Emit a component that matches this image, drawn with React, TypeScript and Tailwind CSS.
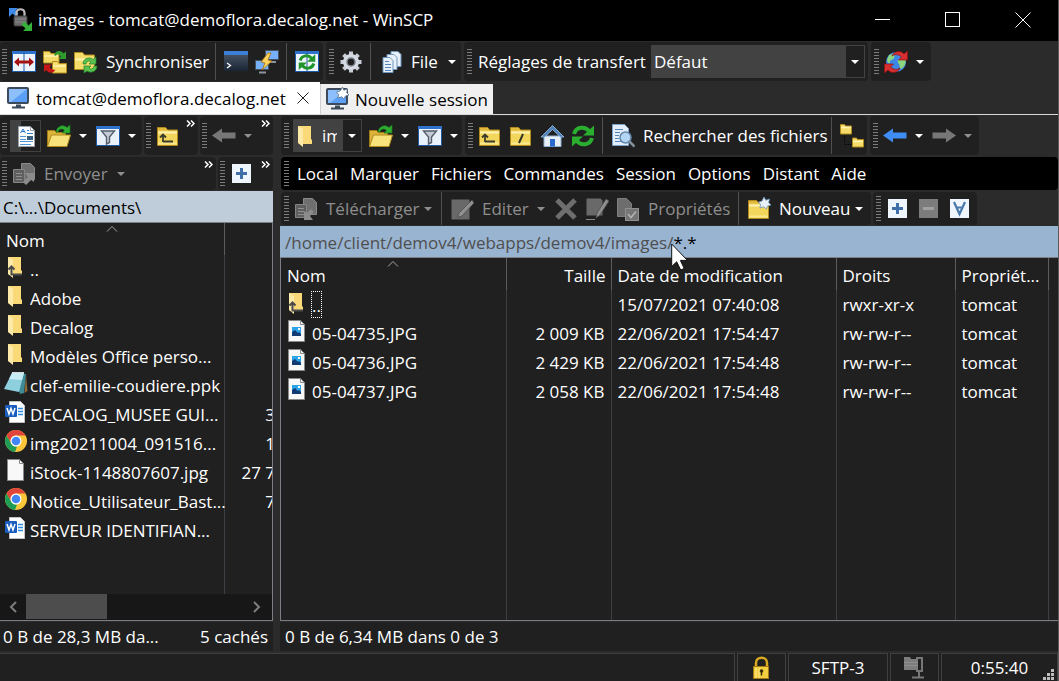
import type { ReactNode } from "react";
import clsx from "clsx";

/* ---------- icons ---------- */

function Svg({ children, size = 24 }: { children: ReactNode; size?: number }) {
  return (
    <svg width={size} height={size} viewBox="0 0 24 24" fill="none" className="shrink-0" aria-hidden="true">
      {children}
    </svg>
  );
}

const Folder = ({ children }: { children?: ReactNode }) => (
  <Svg>
    <path d="M1.500 21.500v-18h8l2 2.500h10v15.500z" fill="#f3d75c" stroke="#b08a1c" />
    <path d="M2 4h7l2 2.500H2z" fill="#e0b83c" />
    <path d="M2 8.500h19" stroke="#fdf2b4" strokeWidth="2" />
    <path d="M2 19.500h19" stroke="#f9e98c" strokeWidth="2" />
    {children}
  </Svg>
);

const FolderUp = () => (
  <Folder>
    <path d="M7 17.500h10M7 18v-7M4 13.500l3-3 3 3" stroke="#3d3d2c" strokeWidth="1.800" />
  </Folder>
);

const FolderRoot = () => (
  <Folder>
    <path d="M10 19l4-9" stroke="#33332a" strokeWidth="2" />
  </Folder>
);

const FolderNew = () => (
  <Folder>
    <path d="M17 0l1.800 3.200L22.500 2l-.8 3.600L24 8l-3.600 1-1 3-2.800-2.200L13 11l.6-3.600L11.500 5l3.500-1z" fill="#e9f2fb" stroke="#6f93b8" strokeWidth=".8" />
  </Folder>
);

const FolderOpen = () => (
  <Svg>
    <path d="M.5 22V6.500h7l2 2h9V22z" fill="#dcb33a" stroke="#a27b17" />
    <path d="M.5 22.500l4-11.500h19l-3.500 11.500z" fill="#f8e27c" stroke="#b08a1c" />
    <path d="M9 8c1-6 7-8 11-4.500L23 1v8h-8l2.500-2.500C15 4 11.500 5 11 8z" fill="#2fae33" stroke="#177a1c" strokeWidth=".7" />
  </Svg>
);

const PanelsCompare = () => (
  <Svg>
    <rect x=".5" y="1.500" width="23" height="20" fill="#eef4fb" stroke="#1e58a8" />
    <path d="M0 2.500h24" stroke="#2d72cc" strokeWidth="3" />
    <path d="M12 1v20" stroke="#1e58a8" />
    <path d="M2 12l5-4.500v3h10v-3l5 4.500-5 4.500v-3H7v3z" fill="#a31212" />
  </Svg>
);

const SyncFolders = () => (
  <Svg>
    <path d="M.5 13V1.500h6l1.500 2h8V13z" fill="#f5dc6a" stroke="#b08a1c" />
    <path d="M9.500 23V11.500h5l1.500 2h7.500V23z" fill="#f5dc6a" stroke="#b08a1c" />
    <path d="M1 6h14M10 16h13" stroke="#fff3b3" strokeWidth="1.500" />
    <path d="M11 5c2-6 8-4.500 9.500-1.500L23 1.500V9h-7.500L18 6.500C16 4 13.500 4 13 6z" fill="#2f9c2e" />
    <path d="M1 14.500h8L6.500 17c1.500 2.500 4 3 6 2.500-2 4.500-7.500 4-9 .5L1 22z" fill="#c41818" />
  </Svg>
);

const SyncFolder = () => (
  <Svg>
    <path d="M.5 19.500V2.500h8l2 2.500h10v14.500z" fill="#f5dc6a" stroke="#b08a1c" />
    <path d="M1 9.500h19" stroke="#fff3b3" strokeWidth="2" />
    <path d="M9 14c0-6 7-7.500 10-4.500L22 7v7h-7l2-2c-2-2-4.500-.5-5 2z" fill="#5ac150" stroke="#1d8226" strokeWidth=".7" />
    <path d="M23 16c0 6-7 7.500-10 5l-3 2v-7h7l-2 2c2 2 4.500.5 5-2z" fill="#5ac150" stroke="#1d8226" strokeWidth=".7" />
  </Svg>
);

const Terminal = () => (
  <Svg>
    <defs>
      <linearGradient id="term" x1="0" y1="0" x2="0" y2="1">
        <stop offset="0" stopColor="#4c5768" />
        <stop offset="1" stopColor="#1a2536" />
      </linearGradient>
    </defs>
    <rect y="2" width="24" height="19" fill="url(#term)" />
    <path d="M0 3h24" stroke="#3c7fd6" strokeWidth="4" />
    <path d="M3 13l3.500 2.500L3 18" stroke="#fff" strokeWidth="1.300" />
  </Svg>
);

const Putty = () => (
  <Svg>
    <rect x="10.500" y=".5" width="13" height="9" fill="#76b0fb" stroke="#47525f" />
    <path d="M14 12h7" stroke="#8b949e" strokeWidth="2" />
    <rect x=".5" y="10.500" width="13" height="9" fill="#76b0fb" stroke="#47525f" />
    <path d="M4 22.500h7" stroke="#8b949e" strokeWidth="2" />
    <path d="M13 3L6 12l4 1-3 7 10-9-4-1 3-7z" fill="#fbd25c" stroke="#a46a12" strokeWidth=".8" />
  </Svg>
);

const CycleArrows = () => (
  <>
    <path d="M3 10C5 2.500 14 2 18 7" stroke="currentColor" strokeWidth="4" />
    <path d="M23 1.500v10H12z" fill="currentColor" />
    <path d="M21 14c-2 7.500-11 8-15 3" stroke="currentColor" strokeWidth="4" />
    <path d="M1 22.500v-10h11z" fill="currentColor" />
  </>
);

const PanelsSync = () => (
  <Svg>
    <rect x=".5" y="1.500" width="23" height="20" fill="#eef4fb" stroke="#1e58a8" />
    <path d="M0 2.500h24" stroke="#2d72cc" strokeWidth="3" />
    <path d="M12 1v20" stroke="#1e58a8" />
    <g transform="translate(3 3) scale(.75)" color="#1f9428">
      <CycleArrows />
    </g>
  </Svg>
);

const Gear = () => (
  <Svg>
    {[0, 45, 90, 135].map((deg) => (
      <path key={deg} d="M12 1.500v21" stroke="#c9cfd8" strokeWidth="4" transform={`rotate(${deg} 12 12)`} />
    ))}
    <circle cx="12" cy="12" r="8" fill="#d6dae2" />
    <circle cx="12" cy="12" r="4" fill="#202020" stroke="#7b828e" strokeWidth="1.500" />
  </Svg>
);

const Queue = () => (
  <Svg>
    {[
      [11.5, 1],
      [7.5, 4],
      [3.5, 7],
    ].map(([x, y]) => (
      <path key={x} transform={`translate(${x} ${y})`} d="M.5.5h7l3 3v12H.5z" fill="#e8f0f9" stroke="#6f95bd" />
    ))}
    <path d="M6 11.500h4M6 14.500h6M6 17.500h6M6 20.500h6" stroke="#5584b8" />
  </Svg>
);

const Globe = () => (
  <Svg>
    <circle cx="12" cy="12" r="10" fill="#3d87e6" />
    <path d="M5 5c4-2 7 0 5 3s-4 1-4 4-3 0-3-2zM15 9l6-1c2 5-1 9-4 11-2-2-1-4-2-5s-2-4 0-5z" fill="#8ad67e" />
    <path d="M8 6c2-5 9-6 12-2l3.500-3v9h-9l3-3C14 4 11 4 8 6z" fill="#d83030" stroke="#8d1010" strokeWidth=".7" />
    <path d="M16 18c-2 5-9 6-12 2L.5 23v-9h9l-3 3c3.500 3 6.500 3 9.500 1z" fill="#d83030" stroke="#8d1010" strokeWidth=".7" />
  </Svg>
);

const Monitor = ({ star = false }: { star?: boolean }) => (
  <Svg>
    <rect x="2" y="2" width="20" height="15" rx="1" fill="#5ba0f6" stroke="#3c4a5c" strokeWidth="2" />
    <path d="M3 3h18L5 16H3z" fill="#8cbffb" />
    <path d="M10 19.500h5M6 21.500h13" stroke="#3c4a5c" strokeWidth="2" />
    {star && (
      <path d="M17.500 0l1.300 3.200L22.500 2l-.8 3.600L24 8l-3.600 1-1.400 3-2.400-2.200L13 11l.6-3.600L11.500 5l3.700-1z" fill="#fff" stroke="#5d7186" strokeWidth=".8" />
    )}
  </Svg>
);

const AppLogo = () => (
  <Svg>
    <path d="M1 0h9L7.500 2.500l3 3-3 3-3-3L1 9z" fill="#3f8ae8" />
    <path d="M8.500 9V5c0-5 8-5 8 0v4" stroke="#bdbdbd" strokeWidth="2.200" />
    <rect x="6" y="8" width="13" height="10" rx="1" fill="#6b6b6b" stroke="#3e3e3e" />
    <path d="M7 11h11M7 14h11" stroke="#8c8c8c" />
    <path d="M24 23h-9l2.500-2.500-4-4 3-3 4 4L24 14z" fill="#35b03a" />
  </Svg>
);

const Filter = () => (
  <Svg>
    <rect x=".5" y="2.500" width="23" height="19" fill="#e9f1fb" stroke="#1e58a8" />
    <path d="M0 3.500h24" stroke="#2d72cc" strokeWidth="3" />
    <path d="M5.500 7h13l-5 6v5.500l-3 1.500v-7z" fill="#c4cbd4" stroke="#54606e" strokeWidth="1.400" />
  </Svg>
);

const DocList = () => (
  <Svg>
    <path d="M4.500 2.500h12l4 4v16h-16z" fill="#fff" stroke="#9aa3ad" />
    <path d="M16.500 2.500v4h4" stroke="#9aa3ad" />
    <path d="M6.500 9l2.500-4 2.500 4M8 7.500h3M13 6.500h2M13 9.500h6" stroke="#2a7bd6" />
    <path d="M6 12.500h6M6 15.500h6M6 17.500h13M6 20.500h11" stroke="#4f95d8" />
    <rect x="13" y="12" width="6" height="4" fill="#39617f" />
  </Svg>
);

const Home = () => (
  <Svg>
    <path d="M4 12h17v10.500H4z" fill="#e7f0f9" stroke="#8fb0d2" />
    <path d="M1 13L12.500 1.500 24 13h-3.500l-8-7.500L4.500 13z" fill="#4d7fb8" stroke="#9dc1e6" strokeWidth=".8" />
    <path d="M10 15h5v7.500h-5z" fill="#2b6bd0" />
  </Svg>
);

const Refresh = () => (
  <Svg>
    <g color="#2aae2f">
      <CycleArrows />
    </g>
  </Svg>
);

const FindFiles = () => (
  <Svg>
    <path d="M1.500.5h12l4 4v17h-16z" fill="#e4eefa" stroke="#7da3cc" />
    <path d="M4 5.500h8M4 8.500h5M4 11.500h4M4 14.500h4M4 17.500h6" stroke="#5584b8" />
    <circle cx="14.500" cy="13.500" r="5.500" fill="#b5d5f5" stroke="#6385a8" strokeWidth="1.500" />
    <path d="M18.500 17.500l5 5" stroke="#81909f" strokeWidth="2.500" />
  </Svg>
);

const Tree = () => (
  <Svg>
    <path d="M.5 10V.5h4l1 1.500h6v8zM12.500 23v-9h4l1 1.500h6V23z" fill="#f5dc6a" stroke="#b08a1c" />
    <path d="M1 3.500h10M13 17.500h10" stroke="#fff3b3" strokeWidth="1.500" />
    <path d="M4.500 12v8.500h7" stroke="#000" strokeDasharray="1 1" />
  </Svg>
);

const Arrow = ({ color, flip = false }: { color: string; flip?: boolean }) => (
  <Svg>
    <path d="M0 11.500l10-7v4h13.500v6H10v4z" fill={color} transform={flip ? "matrix(-1 0 0 1 24 0)" : undefined} />
  </Svg>
);

const Transfer = ({ up = false }: { up?: boolean }) => (
  <Svg>
    <path d="M9.500 1.500h9l4 4v12h-13z" fill="#6f6f6f" stroke="#8a8a8a" />
    <path d="M1.500 7.500h11v13h-11z" fill="#5f5f5f" stroke="#858585" />
    <path d="M4 11.500h6M4 14.500h6M4 17.500h6" stroke="#8f8f8f" />
    {up ? (
      <path d="M22 11v9l-3-2-5 5-3-3 5-5-3-4z" fill="#8c8c8c" />
    ) : (
      <path d="M10 23v-9l3 2 4-4 3 3-4 4 3 4z" fill="#8c8c8c" />
    )}
  </Svg>
);

const Edit = () => (
  <Svg>
    <path d="M1.500 2.500h18v20h-18z" fill="#696969" />
    <path d="M22 3L9 16l-1.500 4.500L12 19 24 6z" fill="#8f8f8f" stroke="#4d4d4d" strokeWidth=".8" />
  </Svg>
);

const Delete = () => (
  <Svg>
    <path d="M3 3l18 18M21 3L3 21" stroke="#6e6e6e" strokeWidth="5" />
  </Svg>
);

const Rename = () => (
  <Svg>
    <path d="M1.500 1.500h14l2 2v15h-16z" fill="#696969" />
    <path d="M1 22.500h9" stroke="#8a8a8a" />
    <path d="M21 2l-9 14-1 5 4-3L24 4z" fill="#8f8f8f" stroke="#4d4d4d" strokeWidth=".8" />
  </Svg>
);

const Properties = () => (
  <Svg>
    <path d="M1.500 1.500h9l5 5v13h-14z" fill="#6d6d6d" stroke="#7e7e7e" />
    <rect x="9.500" y="11.500" width="13" height="12" fill="#757575" stroke="#8f8f8f" />
    <path d="M12 17l3 3.500 5-6" stroke="#b4b4b4" strokeWidth="1.500" />
  </Svg>
);

const SelectMark = ({ kind }: { kind: "plus" | "minus" | "all" }) => (
  <Svg>
    <rect x="2" y="2" width="19" height="19" fill={kind === "minus" ? "#7c7c7c" : "#eef5fd"} />
    {kind === "plus" && <path d="M11.500 6v11M6 11.500h11" stroke="#3f6ea8" strokeWidth="3" />}
    {kind === "minus" && <path d="M6 11.500h11" stroke="#a0a0a0" strokeWidth="3" />}
    {kind === "all" && <path d="M6 5l5.500 12L17 5M8 10.500h7" stroke="#4a79ad" strokeWidth="2.200" />}
  </Svg>
);

const FileFolder = ({ up = false }: { up?: boolean }) => (
  <Svg>
    <path d="M4 2h13v13l1 1v4H8l-4-1z" fill="#f9d978" />
    <path d="M4 2l5 3v18l-5-4z" fill="#fdeaa9" />
    {up && <path d="M7.500 12v7.500H18M4.500 14.500l3-3 3 3" stroke="#4a4a4a" strokeWidth="2" />}
  </Svg>
);

const FilePage = ({ children }: { children?: ReactNode }) => (
  <Svg>
    <path d="M3.500 1.500h12l4 4v17h-16z" fill="#f8f8f8" stroke="#8a8a8a" />
    <path d="M15.500 1.500v4h4" stroke="#8a8a8a" />
    {children}
  </Svg>
);

const FileImage = () => (
  <FilePage>
    <rect x="7" y="8" width="9" height="9" fill="#2da3e8" />
    <path d="M7 17v-4l3-2 3 3 1-1 2 2v2z" fill="#123a73" />
    <rect x="13" y="9" width="2" height="2" fill="#fff" />
  </FilePage>
);

const FileWord = () => (
  <Svg>
    <path d="M5.500 1.500h11l4 4v17h-15z" fill="#fff" stroke="#c2c2c2" />
    <path d="M14 8.500h5M14 11.500h5M14 14.500h5" stroke="#2f8be0" strokeWidth="1.500" />
    <rect x="1" y="5" width="12" height="12" rx="1" fill="#1a5dbe" />
    <path d="M3 8l2 6 2-5.500L9 14l2-6" stroke="#fff" strokeWidth="1.500" />
  </Svg>
);

const FileKey = () => (
  <Svg>
    <path d="M22 4l1.500 16-3 2z" fill="#8b6a35" />
    <path d="M9 1l13 2-2 19-4 1z" fill="#3f8b96" />
    <path d="M8 2h12l-5 19L0 18z" fill="#8fd0de" />
    <path d="M8 2h12l-2 7L5 8z" fill="#c8ecf3" />
    <path d="M8 1.500h12" stroke="#d9d9d9" />
  </Svg>
);

const FileChrome = () => (
  <Svg>
    <circle cx="12" cy="12" r="11" fill="#fbc63a" />
    <path d="M2.500 6.500a11 11 0 0 1 19 0H12a5.500 5.500 0 0 0-4.800 8.200z" fill="#e0443a" />
    <path d="M2.500 6.500l4.800 8.200A5.500 5.500 0 0 0 13 17.400L11 23A11 11 0 0 1 2.500 6.500z" fill="#1f9d57" />
    <circle cx="12" cy="12" r="5.500" fill="#fff" />
    <circle cx="12" cy="12" r="4.300" fill="#4285f4" />
  </Svg>
);

const Padlock = () => (
  <Svg>
    <path d="M6 11V7c0-7 11-7 11 0v4" stroke="#d9aa1f" strokeWidth="2.500" />
    <rect x="3.500" y="10.500" width="15" height="12" fill="#f2cf3f" stroke="#a27b17" />
    <path d="M6 12v10M9 12v10" stroke="#fbe98d" />
    <circle cx="11.500" cy="15" r="1.800" fill="#3a2c08" />
    <path d="M11.500 15v4.500" stroke="#3a2c08" strokeWidth="1.500" />
  </Svg>
);

const Compress = () => (
  <Svg>
    <path d="M1 1h6l1 2h7v11H1z" fill="#7d7d7d" />
    <path d="M1 6.500h14M1 9.500h14" stroke="#8f8f8f" />
    <path d="M13 2h6v13h-6M16 15v6M9 21.500h12" stroke="#777" strokeWidth="2" />
  </Svg>
);

const ScrollArrow = ({ right = false }: { right?: boolean }) => (
  <svg width="10" height="12" viewBox="0 0 10 12" fill="none" aria-hidden="true">
    <path d={right ? "M2 1l5 5-5 5" : "M8 1L3 6l5 5"} stroke="#7d7d7d" strokeWidth="2" />
  </svg>
);

/* ---------- toolbar parts ---------- */

function Band({ children, className }: { children: ReactNode; className?: string }) {
  return (
    <div role="toolbar" className={clsx("flex items-center overflow-hidden rounded-sm bg-[#202020]", className)}>
      <span className="ml-[2px] mr-px h-[25px] w-[5px] shrink-0 bg-[repeating-linear-gradient(to_bottom,#7c7c7c_0_1px,transparent_1px_3px)]" />
      {children}
    </div>
  );
}

function Tool({ label, children, className }: { label: string; children: ReactNode; className?: string }) {
  return (
    <button type="button" aria-label={label} className={clsx("flex h-8 w-[31px] shrink-0 items-center justify-center", className)}>
      {children}
    </button>
  );
}

function TextTool({ children, className }: { children: ReactNode; className?: string }) {
  return (
    <button type="button" className={clsx("h-8 shrink-0 whitespace-nowrap pl-[5px] text-left", className)}>
      {children}
    </button>
  );
}

const Triangle = ({ dim = false }: { dim?: boolean }) => (
  <svg width="8" height="4" viewBox="0 0 8 4" aria-hidden="true">
    <path d="M0 0h8L4 4z" fill={dim ? "#8e8e8e" : "#fff"} />
  </svg>
);

const Caret = ({ dim = false }: { dim?: boolean }) => (
  <button type="button" aria-label="Menu" className="flex h-8 w-[18px] shrink-0 items-center justify-center">
    <Triangle dim={dim} />
  </button>
);

const Separator = () => <span className="mx-1 h-[37px] w-px shrink-0 bg-[#505050]" />;

const More = () => (
  <button type="button" aria-label="Plus" className="ml-auto mr-px flex w-[14px] shrink-0 justify-center self-start pt-1">
    <svg width="9" height="7" viewBox="0 0 9 7" fill="none" aria-hidden="true">
      <path d="M1 .5l3 3-3 3M5 .5l3 3-3 3" stroke="#fff" strokeWidth="1.500" />
    </svg>
  </button>
);

const SortMark = () => (
  <svg width="12" height="6" viewBox="0 0 12 6" fill="none" className="absolute left-1/2 top-[3px] -translate-x-1/2" aria-hidden="true">
    <path d="M1 5.500l5-5 5 5" stroke="#a5a5a5" />
  </svg>
);

/* ---------- data ---------- */

const localFiles = [
  { icon: <FileFolder up />, name: "..", size: "" },
  { icon: <FileFolder />, name: "Adobe", size: "" },
  { icon: <FileFolder />, name: "Decalog", size: "" },
  { icon: <FileFolder />, name: "Modèles Office perso...", size: "" },
  { icon: <FileKey />, name: "clef-emilie-coudiere.ppk", size: "" },
  { icon: <FileWord />, name: "DECALOG_MUSEE GUI...", size: "3" },
  { icon: <FileChrome />, name: "img20211004_091516...", size: "1" },
  { icon: <FilePage />, name: "iStock-1148807607.jpg", size: "27 7" },
  { icon: <FileChrome />, name: "Notice_Utilisateur_Bast...", size: "7" },
  { icon: <FileWord />, name: "SERVEUR IDENTIFIAN...", size: "" },
];

const remoteFiles = [
  { name: "..", size: "", date: "15/07/2021 07:40:08", rights: "rwxr-xr-x", owner: "tomcat" },
  { name: "05-04735.JPG", size: "2 009 KB", date: "22/06/2021 17:54:47", rights: "rw-rw-r--", owner: "tomcat" },
  { name: "05-04736.JPG", size: "2 429 KB", date: "22/06/2021 17:54:48", rights: "rw-rw-r--", owner: "tomcat" },
  { name: "05-04737.JPG", size: "2 058 KB", date: "22/06/2021 17:54:48", rights: "rw-rw-r--", owner: "tomcat" },
];

const menus = ["Local", "Marquer", "Fichiers", "Commandes", "Session", "Options", "Distant", "Aide"];

const th = "relative border-r border-[#5c5c5c] px-[6px] pb-0 pt-[3px] text-left font-normal";
const td = "border-r border-[#3d3f45] px-[6px] py-0 whitespace-nowrap";

/* ---------- window ---------- */

function TitleBar() {
  return (
    <header className="flex h-[41px] shrink-0 items-center bg-black pb-[2px] pl-2">
      <AppLogo />
      <h1 className="ml-[6px] flex-1 truncate">images - tomcat@demoflora.decalog.net - WinSCP</h1>
      <button type="button" aria-label="Réduire" className="flex h-full w-[69px] items-center justify-center">
        <span className="h-px w-[15px] bg-white" />
      </button>
      <button type="button" aria-label="Agrandir" className="flex h-full w-[70px] items-center justify-center">
        <span className="size-[15px] border border-white" />
      </button>
      <button type="button" aria-label="Fermer" className="flex h-full w-[71px] items-center justify-center">
        <svg width="16" height="16" viewBox="0 0 16 16" aria-hidden="true">
          <path d="M.5.5l15 15M15.500.5l-15 15" stroke="#fff" />
        </svg>
      </button>
    </header>
  );
}

function MainToolbar() {
  return (
    <div className="flex h-[41px] shrink-0 gap-[3px] py-px">
      <Band className="w-[323px]">
        <Tool label="Comparer les dossiers"><PanelsCompare /></Tool>
        <Tool label="Synchroniser les dossiers"><SyncFolders /></Tool>
        <Tool label="Garder à jour"><SyncFolder /></Tool>
        <TextTool className="w-[110px]">Synchroniser</TextTool>
        <Separator />
        <Tool label="Terminal"><Terminal /></Tool>
        <Tool label="PuTTY"><Putty /></Tool>
        <Separator />
        <Tool label="Navigation synchronisée"><PanelsSync /></Tool>
      </Band>
      <Band className="w-[135px] pl-px">
        <Tool label="Préférences"><Gear /></Tool>
        <Separator />
        <Tool label="Voir la file"><Queue /></Tool>
        <TextTool className="w-[37px]">File</TextTool>
        <Caret />
      </Band>
      <Band className="w-[404px] px-px">
        <label htmlFor="preset" className="w-[178px] shrink-0 whitespace-nowrap pl-[5px]">
          Réglages de transfert
        </label>
        <span className="relative mr-[2px] flex-1">
          <select id="preset" className="h-[33px] w-full appearance-none rounded-none border border-[#424242] bg-[#424242] pl-[2px] text-white">
            <option>Défaut</option>
          </select>
          <span className="pointer-events-none absolute inset-y-px right-px flex w-[18px] items-center justify-center bg-[#202020]">
            <Triangle />
          </span>
        </span>
      </Band>
      <Band className="w-[60px] pl-px">
        <Tool label="Actualiser la session"><Globe /></Tool>
        <Caret />
      </Band>
    </div>
  );
}

function SessionTabs() {
  return (
    <nav className="flex h-[33px] shrink-0 items-end border-b border-[#d9d9d9] text-black">
      <div className="flex h-full w-[320px] items-center bg-white pl-[6px]">
        <Monitor />
        <a href="#session" className="ml-[6px] flex-1 whitespace-nowrap pt-[2px]">tomcat@demoflora.decalog.net</a>
        <button type="button" aria-label="Fermer la session" className="mr-[11px]">
          <svg width="12" height="12" viewBox="0 0 12 12" aria-hidden="true">
            <path d="M.5.5l11 11M11.500.5l-11 11" stroke="#222" />
          </svg>
        </button>
      </div>
      <a href="#new" className="flex h-[30px] w-[173px] items-center border-l border-[#d0d0d0] bg-[#f0f0f0] pl-1">
        <Monitor star />
        <span className="ml-[6px] whitespace-nowrap pt-[2px]">Nouvelle session</span>
      </a>
    </nav>
  );
}

function LocalPane() {
  return (
    <section className="flex w-[273px] shrink-0 flex-col">
      <div className="mt-px flex h-[39px] shrink-0 gap-[2px]">
        <Band className="w-[142px]">
          <Tool label="Lecteur" className="mx-[2px] border border-[#424242] bg-linear-to-r from-[#424242] from-35% to-[#202020] to-35%">
            <DocList />
          </Tool>
          <Tool label="Ouvrir un dossier"><FolderOpen /></Tool>
          <Caret />
          <Tool label="Filtre"><Filter /></Tool>
          <Caret />
        </Band>
        <Band className="w-[54px]">
          <Tool label="Dossier parent"><FolderUp /></Tool>
          <More />
        </Band>
        <Band className="flex-1">
          <Tool label="Précédent"><Arrow color="#777" /></Tool>
          <Caret dim />
          <More />
        </Band>
      </div>
      <div className="mt-[2px] flex h-[33px] shrink-0 gap-[2px]">
        <Band className="w-[216px] text-[#8e8e8e]">
          <Tool label="Envoyer les fichiers"><Transfer up /></Tool>
          <TextTool className="w-[73px]">Envoyer</TextTool>
          <Caret dim />
          <More />
        </Band>
        <Band className="flex-1">
          <Tool label="Sélectionner"><SelectMark kind="plus" /></Tool>
          <More />
        </Band>
      </div>
      <div className="mt-px h-[31px] shrink-0 bg-[#bfcddb] pl-[3px] leading-[33px] text-black">C:\...\Documents\</div>
      <div className="flex min-h-0 flex-1 flex-col border border-l-0 border-[#7d7d86] bg-[#202020]">
        <div className="min-h-0 flex-1 overflow-hidden">
          <table className="h-full w-[275px] table-fixed border-collapse">
            <colgroup>
              <col className="w-[224px]" />
              <col />
            </colgroup>
            <thead>
              <tr className="h-8">
                <th className={th}>
                  Nom
                  <SortMark />
                </th>
                <th aria-label="Taille" />
              </tr>
            </thead>
            <tbody>
              {localFiles.map((file) => (
                <tr key={file.name} className="h-[29px]">
                  <td className="border-r border-[#3d3f45] p-0">
                    <span className="flex gap-[2px] pl-1 leading-[29px]">
                      {file.icon}
                      <span className="whitespace-nowrap">{file.name}</span>
                    </span>
                  </td>
                  <td className="p-0 text-right whitespace-nowrap">{file.size}</td>
                </tr>
              ))}
              <tr>
                <td className="border-r border-[#3d3f45]" />
                <td />
              </tr>
            </tbody>
          </table>
        </div>
        <div className="flex h-[26px] shrink-0 items-stretch bg-[#171717]">
          <button type="button" aria-label="Défiler à gauche" className="flex w-[26px] items-center justify-center">
            <ScrollArrow />
          </button>
          <span className="mb-px w-[81px] bg-[#4d4d4d]" />
          <button type="button" aria-label="Défiler à droite" className="ml-auto flex w-[30px] items-center justify-center">
            <ScrollArrow right />
          </button>
        </div>
      </div>
      <div className="mt-px flex h-[29px] shrink-0 items-center justify-between bg-[#202020] pl-[3px] pr-[5px]">
        <span>0 B de 28,3 MB da...</span>
        <span>5 cachés</span>
      </div>
    </section>
  );
}

function RemoteToolbars() {
  return (
    <>
      <div className="mt-px flex h-[39px] shrink-0 gap-[3px] pl-px">
        <Band className="w-[181px] pl-px">
          <button type="button" className="mx-[3px] flex h-[33px] w-[69px] shrink-0 items-center border border-[#424242] bg-[#424242]">
            <FileFolder />
            <span className="ml-1 w-[15px] overflow-hidden text-left">im</span>
            <span className="ml-auto flex h-full w-[18px] items-center justify-center bg-[#202020]">
              <Triangle />
            </span>
          </button>
          <Tool label="Ouvrir un dossier"><FolderOpen /></Tool>
          <Caret />
          <Tool label="Filtre"><Filter /></Tool>
          <Caret />
        </Band>
        <Band className="w-[402px] pl-px">
          <Tool label="Dossier parent"><FolderUp /></Tool>
          <Tool label="Dossier racine"><FolderRoot /></Tool>
          <Tool label="Dossier personnel"><Home /></Tool>
          <Tool label="Actualiser"><Refresh /></Tool>
          <Separator />
          <Tool label="Rechercher"><FindFiles /></Tool>
          <TextTool className="w-[189px]">Rechercher des fichiers</TextTool>
          <Separator />
          <Tool label="Arborescence"><Tree /></Tool>
        </Band>
        <Band className="w-[109px] pl-px">
          <Tool label="Précédent"><Arrow color="#3f8cf3" /></Tool>
          <Caret />
          <Tool label="Suivant"><Arrow color="#777" flip /></Tool>
          <Caret dim />
        </Band>
      </div>
      <div className="mt-[2px] flex h-[33px] shrink-0 pl-px">
        <Band className="flex-1 bg-black pl-px">
          <ul className="flex gap-3 pl-[7px]">
            {menus.map((menu) => (
              <li key={menu}>
                <button type="button">{menu}</button>
              </li>
            ))}
          </ul>
        </Band>
      </div>
      <div className="mt-[2px] flex h-[33px] shrink-0 gap-[2px] pl-px text-[#8e8e8e]">
        <Band className="w-[590px] pl-px">
          <Tool label="Télécharger les fichiers"><Transfer /></Tool>
          <TextTool className="w-[98px]">Télécharger</TextTool>
          <Caret dim />
          <Separator />
          <Tool label="Modifier"><Edit /></Tool>
          <TextTool className="w-[55px]">Editer</TextTool>
          <Caret dim />
          <Tool label="Supprimer"><Delete /></Tool>
          <Tool label="Renommer"><Rename /></Tool>
          <Tool label="Voir les propriétés"><Properties /></Tool>
          <TextTool className="w-[91px]">Propriétés</TextTool>
          <Separator />
          <Tool label="Nouveau dossier"><FolderNew /></Tool>
          <TextTool className="w-[76px] text-white">Nouveau</TextTool>
          <Caret />
        </Band>
        <Band className="w-[104px] pl-px">
          <Tool label="Sélectionner"><SelectMark kind="plus" /></Tool>
          <Tool label="Désélectionner"><SelectMark kind="minus" /></Tool>
          <Tool label="Tout sélectionner"><SelectMark kind="all" /></Tool>
        </Band>
      </div>
    </>
  );
}

function RemotePane() {
  return (
    <section className="flex min-w-0 flex-1 flex-col">
      <RemoteToolbars />
      <div className="mt-px h-[31px] shrink-0 bg-[#99b4d1] pl-[5px] leading-[33px] text-[#4f4f4f]">
        /home/client/demov4/webapps/demov4/images
        <span className="relative">
          /
          <svg width="18" height="28" viewBox="0 0 18 28" className="absolute left-1 top-3 z-10" aria-hidden="true">
            <path d="M.7 1v22.500l5-4.700 4 8.200 3.500-1.600-3.800-8h7z" fill="#fff" stroke="#111" />
          </svg>
        </span>
        <span className="text-black">*.*</span>
      </div>
      <div className="min-h-0 flex-1 overflow-hidden border border-r-0 border-[#7d7d86] bg-[#202020]">
        <table className="h-full w-full table-fixed border-collapse">
          <colgroup>
            <col className="w-[225px]" />
            <col className="w-[105px]" />
            <col className="w-[225px]" />
            <col className="w-[119px]" />
            <col className="w-[93px]" />
            <col />
          </colgroup>
          <thead>
            <tr className="h-8">
              <th className={th}>
                Nom
                <SortMark />
              </th>
              <th className="border-r border-[#5c5c5c] px-[5px] pb-0 pt-[3px] text-right font-normal">Taille</th>
              <th className={th}>Date de modification</th>
              <th className={th}>Droits</th>
              <th className={th}>Propriét...</th>
              <th aria-hidden="true" />
            </tr>
          </thead>
          <tbody>
            {remoteFiles.map((file, i) => (
              <tr key={file.name} className="h-[29px]">
                <td className="border-r border-[#3d3f45] p-0">
                  <span className="flex gap-[2px] pl-1 leading-[29px]">
                    {i === 0 ? <FileFolder up /> : <FileImage />}
                    <span className={clsx("px-px", i === 0 && "h-[27px] outline-1 -outline-offset-1 outline-dotted outline-white")}>
                      {file.name}
                    </span>
                  </span>
                </td>
                <td className={clsx(td, "text-right")}>{file.size}</td>
                <td className={td}>{file.date}</td>
                <td className={td}>{file.rights}</td>
                <td className={td}>{file.owner}</td>
                <td />
              </tr>
            ))}
            <tr>
              <td className={td} />
              <td className={td} />
              <td className={td} />
              <td className={td} />
              <td className={td} />
              <td />
            </tr>
          </tbody>
        </table>
      </div>
      <div className="mt-px flex h-[29px] shrink-0 items-center bg-[#202020] pl-[5px]">0 B de 6,34 MB dans 0 de 3</div>
    </section>
  );
}

function StatusBar() {
  const cell = "flex items-center justify-center border border-b-0 border-[#404040]";
  return (
    <footer className="mt-[2px] flex h-7 shrink-0 gap-[2px] bg-[#202020]">
      <span className={clsx(cell, "flex-1 border-l-0")} />
      <span className={clsx(cell, "w-[49px]")}><Padlock /></span>
      <span className={clsx(cell, "w-[100px]")}>SFTP-3</span>
      <span className={clsx(cell, "w-[49px]")}><Compress /></span>
      <span className={clsx(cell, "relative w-[117px]")}>
        0:55:40
        <svg width="12" height="12" viewBox="0 0 12 12" className="absolute bottom-0 right-[2px]" aria-hidden="true">
          <path d="M8 0h3v3H8zM8 4h3v3H8zM8 8h3v3H8zM4 4h3v3H4zM4 8h3v3H4zM0 8h3v3H0z" fill="#bdbdbd" />
        </svg>
      </span>
    </footer>
  );
}

export default function App() {
  return (
    <div className="flex h-screen flex-col overflow-hidden border-r border-[#5a5a5a] bg-[#2b2b2b] font-['Open_Sans','Noto_Sans',sans-serif] text-[17px] leading-[24px] text-white">
      <TitleBar />
      <MainToolbar />
      <SessionTabs />
      <main className="flex min-h-0 flex-1 gap-[7px]">
        <LocalPane />
        <RemotePane />
      </main>
      <StatusBar />
    </div>
  );
}
